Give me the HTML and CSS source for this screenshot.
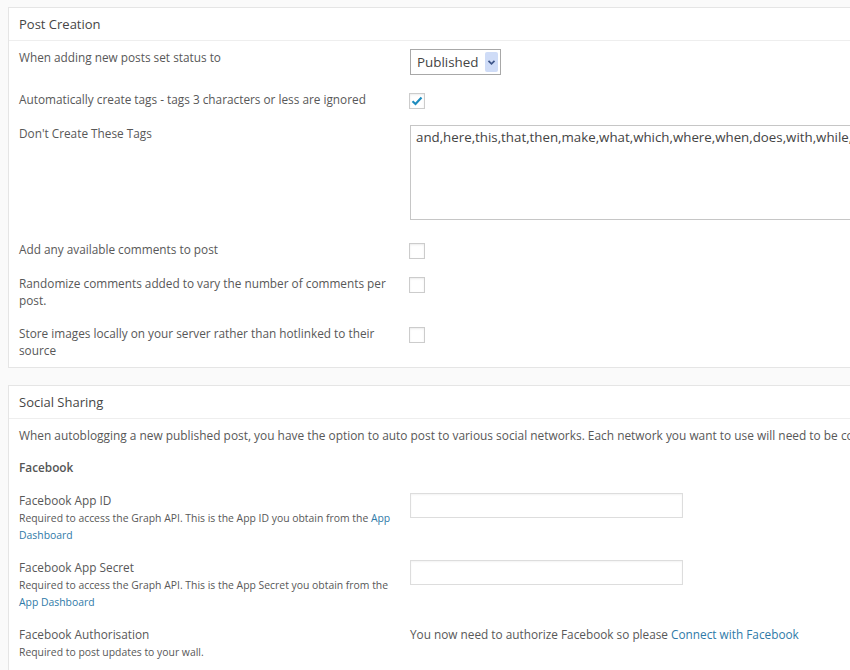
FILE: index.html
```html
<!DOCTYPE html>
<html>
<head>
<meta charset="utf-8">
<link rel="stylesheet" href="styles.css">
</head>
<body>
<div class="page">
  <div class="box">
    <div class="box-head">Post Creation</div>
    <div class="box-body">
      <div class="row">
        <div class="label">When adding new posts set status to</div>
        <div class="field">
          <div class="select"><span class="select-text">Published</span><span class="select-btn"><svg width="9" height="7" viewBox="0 0 9 7"><path d="M1.5 1.8 L4.5 4.8 L7.5 1.8" fill="none" stroke="#3d5588" stroke-width="1.7"/></svg></span></div>
        </div>
      </div>
      <div class="row">
        <div class="label">Automatically create tags - tags 3 characters or less are ignored</div>
        <div class="field"><span class="check checked"><svg width="12" height="10" viewBox="0 0 12 10"><path d="M1.5 5.2 L4.5 8 L10.5 1.5" fill="none" stroke="#1e8cbe" stroke-width="2.2"/></svg></span></div>
      </div>
      <div class="row">
        <div class="label">Don't Create These Tags</div>
        <div class="field"><textarea class="tags" wrap="off" readonly>and,here,this,that,then,make,what,which,where,when,does,with,while,you,your,they,them,from,have,been</textarea></div>
      </div>
      <div class="row">
        <div class="label">Add any available comments to post</div>
        <div class="field"><span class="check"></span></div>
      </div>
      <div class="row">
        <div class="label">Randomize comments added to vary the number of comments per post.</div>
        <div class="field"><span class="check"></span></div>
      </div>
      <div class="row">
        <div class="label">Store images locally on your server rather than hotlinked to their source</div>
        <div class="field"><span class="check"></span></div>
      </div>
    </div>
  </div>

  <div class="box">
    <div class="box-head">Social Sharing</div>
    <div class="box-body">
      <p class="intro">When autoblogging a new published post, you have the option to auto post to various social networks. Each network you want to use will need to be configured below.</p>
      <h4 class="network">Facebook</h4>
      <div class="row row-fb">
        <div class="label">
          <div class="name">Facebook App ID</div>
          <div class="desc">Required to access the Graph API. This is the App ID you obtain from the <a href="#">App Dashboard</a></div>
        </div>
        <div class="field"><input class="text" type="text"></div>
      </div>
      <div class="row row-fb">
        <div class="label">
          <div class="name">Facebook App Secret</div>
          <div class="desc">Required to access the Graph API. This is the App Secret you obtain from the <a href="#">App Dashboard</a></div>
        </div>
        <div class="field"><input class="text" type="text"></div>
      </div>
      <div class="row row-fb row-last">
        <div class="label">
          <div class="name">Facebook Authorisation</div>
          <div class="desc">Required to post updates to your wall.</div>
        </div>
        <div class="field"><span class="auth">You now need to authorize Facebook so please <a href="#">Connect with Facebook</a></span></div>
      </div>
    </div>
  </div>
</div>
</body>
</html>
```

FILE: styles.css
```css
html, body {
  margin: 0;
  padding: 0;
  background: #fafafa;
  overflow: hidden;
}
body {
  font-family: "Open Sans", "DejaVu Sans", sans-serif;
  color: #585858;
  font-size: 11.8px;
  line-height: 17px;
}
.page {
  padding: 7px 0 0 8px;
  width: 900px;
}
.box {
  background: #fff;
  border: 1px solid #e5e5e5;
  margin-bottom: 17px;
}
.box-head {
  height: 32px;
  line-height: 32px;
  padding-left: 10px;
  font-size: 13px;
  color: #464646;
  border-bottom: 1px solid #eee;
}
.box-body {
  padding: 0 10px;
}
.row {
  display: grid;
  grid-template-columns: 391px 1fr;
  padding: 8px 0;
}
.label {
  padding-right: 10px;
}
.field {
  display: flex;
  align-items: flex-start;
}
.select {
  display: flex;
  align-items: center;
  box-sizing: border-box;
  width: 91px;
  height: 26px;
  border: 1px solid #a8a8a8;
  background: #fff;
  padding: 0 2px 0 6px;
}
.select-text {
  flex: 1;
  font-size: 13.4px;
  color: #444;
}
.select-btn {
  width: 13px;
  height: 20px;
  background: #cfdcf7;
  border-radius: 2px;
  display: flex;
  align-items: center;
  justify-content: center;
}
.check {
  box-sizing: border-box;
  width: 16px;
  height: 16px;
  margin-top: 2px;
  margin-left: -1px;
  border: 1px solid #cccccc;
  background: #fff;
  box-shadow: inset 0 1px 2px rgba(0,0,0,0.08);
  display: flex;
  align-items: center;
  justify-content: center;
}
.tags {
  box-sizing: border-box;
  width: 480px;
  height: 95px;
  margin: 0 0 5px 0;
  border: 1px solid #c6c6c6;
  padding: 3px 5px;
  font-family: "Open Sans", "DejaVu Sans", sans-serif;
  font-size: 13.3px;
  line-height: 17px;
  color: #444;
  resize: none;
  overflow: hidden;
  background: #fff;
  outline: none;
}
.intro {
  margin: 0;
  padding-top: 8px;
  white-space: nowrap;
  font-size: 11.9px;
}
.network {
  margin: 15px 0 8px;
  font-size: 11.8px;
  font-weight: 600;
  line-height: 17px;
  color: #555;
}
.row-fb {
  padding: 8px 0 7px;
}
.row-last {
  padding-bottom: 20px;
}
.desc {
  font-size: 10.4px;
  line-height: 17px;
  margin-top: 1px;
}
a {
  color: #2f7aa8;
  text-decoration: none;
}
.text {
  box-sizing: border-box;
  width: 273px;
  height: 25px;
  border: 1px solid #dddddd;
  box-shadow: inset 0 1px 2px rgba(0,0,0,0.05);
  background: #fff;
  margin-top: 1px;
}
.auth {
  font-size: 11.8px;
}
```
